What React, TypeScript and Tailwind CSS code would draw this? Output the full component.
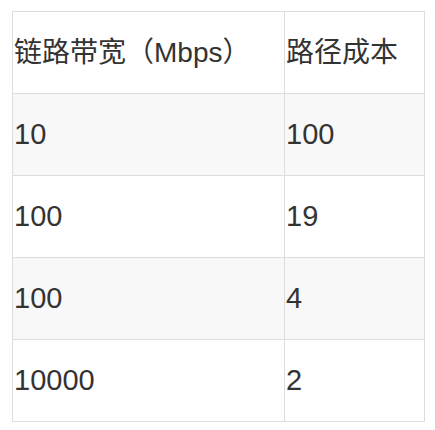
export default function App() {
  const rows = [
    ["10", "100"],
    ["100", "19"],
    ["100", "4"],
    ["10000", "2"],
  ];
  return (
    <div className="w-[435px] h-[430px] bg-white pt-[11px] pl-[12px]" style={{ fontFamily: '"Liberation Sans", "Noto Sans CJK SC", sans-serif' }}>
      <table className="border-collapse text-[#333] leading-none">
        <tbody>
          <tr className="text-[28px]">
            <td className="border border-[#dddddd] w-[272px] h-[82px] pl-[1px] align-middle">链路带宽（Mbps）</td>
            <td className="border border-[#dddddd] w-[140px] h-[82px] pl-[1px] align-middle">路径成本</td>
          </tr>
          {rows.map((r, i) => (
            <tr key={i} className={i % 2 === 0 ? "bg-[#f8f8f8] text-[29px]" : "bg-white text-[29px]"}>
              <td className="border border-[#dddddd] h-[82px] pl-[1px] align-middle">{r[0]}</td>
              <td className="border border-[#dddddd] h-[82px] pl-[1px] align-middle">{r[1]}</td>
            </tr>
          ))}
        </tbody>
      </table>
    </div>
  );
}
